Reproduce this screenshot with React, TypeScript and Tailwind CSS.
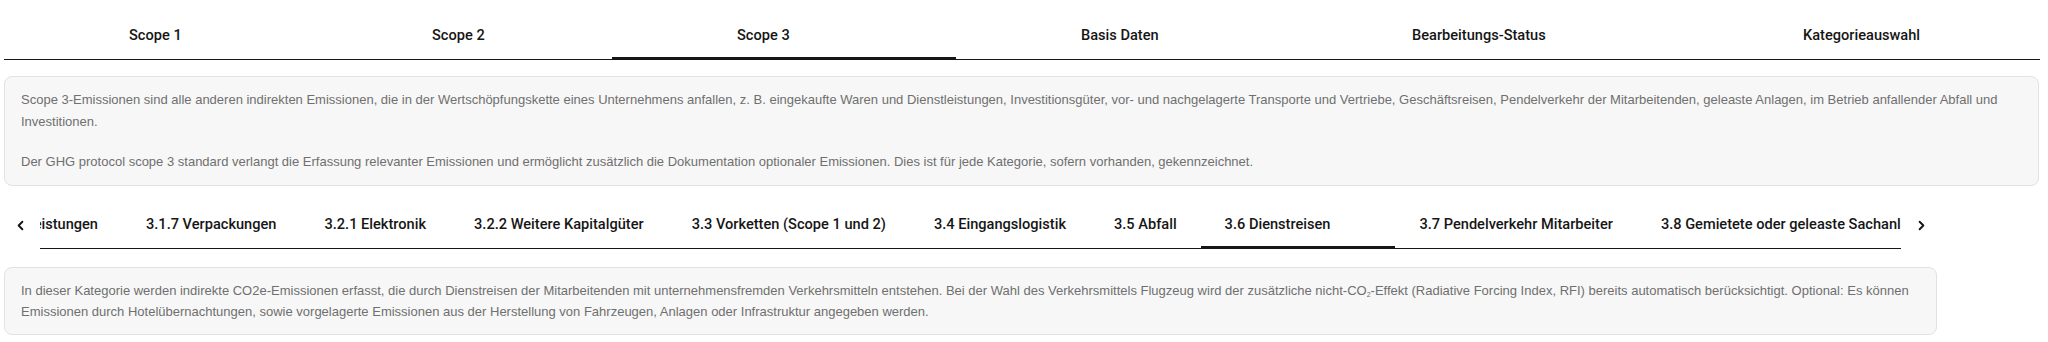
import React from "react";
import { ChevronLeft, ChevronRight } from "lucide-react";

const topTabs = [
  { label: "Scope 1", cls: "w-[303px] border-b" },
  { label: "Scope 2", cls: "w-[305px] border-b" },
  { label: "Scope 3", cls: "w-[344px] border-b-[3px] pt-[2px]" },
  { label: "Basis Daten", cls: "w-[331px] border-b" },
  { label: "Bearbeitungs-Status", cls: "w-[391px] border-b" },
  { label: "Kategorieauswahl", cls: "w-[362px] border-b" },
];

const subTabs = [
  { label: "3.1.7 Verpackungen", active: false },
  { label: "3.2.1 Elektronik", active: false },
  { label: "3.2.2 Weitere Kapitalgüter", active: false },
  { label: "3.3 Vorketten (Scope 1 und 2)", active: false },
  { label: "3.4 Eingangslogistik", active: false },
  { label: "3.5 Abfall", active: false },
  { label: "3.6 Dienstreisen", active: true },
  { label: "3.7 Pendelverkehr Mitarbeiter", active: false },
  { label: "3.8 Gemietete oder geleaste Sachanlagen", active: false },
];

export default function App() {
  return (
    <div className="w-[2048px] h-[342px] bg-white overflow-hidden">
      {/* Top tabs */}
      <div className="pt-3 pl-1">
        <div className="flex w-[2036px] h-12 font-['Roboto',sans-serif] text-[14.6px] font-medium text-[#161616]">
          {topTabs.map((t) => (
            <div
              key={t.label}
              className={`flex items-center whitespace-nowrap border-[#161616] pl-[125px] ${t.cls}`}
            >
              {t.label}
            </div>
          ))}
        </div>
      </div>

      {/* Scope 3 info box */}
      <div className="mt-4 ml-1 w-[2035px] rounded-lg border border-[#e2e2e2] bg-[#f7f7f7] px-4 py-3 font-['Liberation_Sans',Arial,sans-serif] text-[13px] leading-[22px] text-[#6f6f6f]">
        <p>
          Scope 3-Emissionen sind alle anderen indirekten Emissionen, die in der Wertschöpfungskette eines Unternehmens anfallen, z. B. eingekaufte Waren und Dienstleistungen, Investitionsgüter, vor- und nachgelagerte Transporte und Vertriebe, Geschäftsreisen, Pendelverkehr der Mitarbeitenden, geleaste Anlagen, im Betrieb anfallender Abfall und Investitionen.
        </p>
        <p className="mt-[18px]">
          Der GHG protocol scope 3 standard verlangt die Erfassung relevanter Emissionen und ermöglicht zusätzlich die Dokumentation optionaler Emissionen. Dies ist für jede Kategorie, sofern vorhanden, gekennzeichnet.
        </p>
      </div>

      {/* Sub tabs */}
      <div className="mt-[15px] flex h-12 items-stretch font-['Roboto',sans-serif] text-[14.6px] font-medium text-[#161616]">
        <div className="flex w-10 items-center justify-center">
          <ChevronLeft size={15} strokeWidth={3} />
        </div>
        <div className="flex w-[1861px] overflow-hidden">
          <div className="flex w-[82px] shrink-0 items-center justify-end overflow-hidden border-b border-[#161616] pr-6 whitespace-nowrap">
            Dienstleistungen
          </div>
          {subTabs.map((s) => (
            <div
              key={s.label}
              className={
                s.active
                  ? "flex shrink-0 items-center border-b-[3px] border-[#161616] pl-6 pr-[65px] pt-[2px] whitespace-nowrap"
                  : "flex shrink-0 items-center border-b border-[#161616] px-6 whitespace-nowrap"
              }
            >
              {s.label}
            </div>
          ))}
        </div>
        <div className="flex w-10 items-center justify-center">
          <ChevronRight size={15} strokeWidth={3} />
        </div>
      </div>

      {/* Category info box */}
      <div className="mt-[18px] ml-1 w-[1933px] rounded-lg border border-[#e2e2e2] bg-[#f7f7f7] px-4 py-3 font-['Liberation_Sans',Arial,sans-serif] text-[13px] leading-[21px] text-[#6f6f6f]">
        In dieser Kategorie werden indirekte CO2e-Emissionen erfasst, die durch Dienstreisen der Mitarbeitenden mit unternehmensfremden Verkehrsmitteln entstehen. Bei der Wahl des Verkehrsmittels Flugzeug wird der zusätzliche nicht-CO
        <sub className="text-[7px]">2</sub>
        -Effekt (Radiative Forcing Index, RFI) bereits automatisch berücksichtigt. Optional: Es können Emissionen durch Hotelübernachtungen, sowie vorgelagerte Emissionen aus der Herstellung von Fahrzeugen, Anlagen oder Infrastruktur angegeben werden.
      </div>
    </div>
  );
}
